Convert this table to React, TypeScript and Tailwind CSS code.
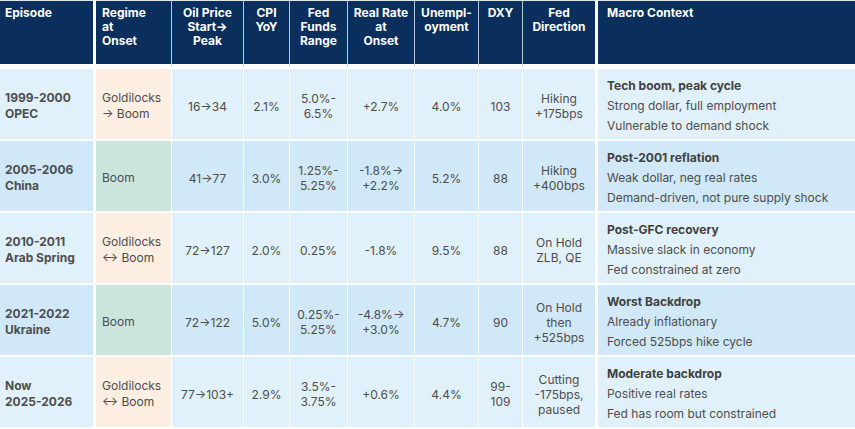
import React from "react"

type Row = {
  episode: [string, string]
  regime: string[]
  regimeKind: "gold" | "boom"
  oil: string
  cpi: string
  fed: string[]
  real: string[]
  unemp: string
  dxy: string[]
  dir: string[]
  context: [string, string, string]
}

const rows: Row[] = [
  {
    episode: ["1999-2000", "OPEC"],
    regime: ["Goldilocks", "→ Boom"],
    regimeKind: "gold",
    oil: "16→34",
    cpi: "2.1%",
    fed: ["5.0%-", "6.5%"],
    real: ["+2.7%"],
    unemp: "4.0%",
    dxy: ["103"],
    dir: ["Hiking", "+175bps"],
    context: ["Tech boom, peak cycle", "Strong dollar, full employment", "Vulnerable to demand shock"],
  },
  {
    episode: ["2005-2006", "China"],
    regime: ["Boom"],
    regimeKind: "boom",
    oil: "41→77",
    cpi: "3.0%",
    fed: ["1.25%-", "5.25%"],
    real: ["-1.8%→", "+2.2%"],
    unemp: "5.2%",
    dxy: ["88"],
    dir: ["Hiking", "+400bps"],
    context: ["Post-2001 reflation", "Weak dollar, neg real rates", "Demand-driven, not pure supply shock"],
  },
  {
    episode: ["2010-2011", "Arab Spring"],
    regime: ["Goldilocks", "↔ Boom"],
    regimeKind: "gold",
    oil: "72→127",
    cpi: "2.0%",
    fed: ["0.25%"],
    real: ["-1.8%"],
    unemp: "9.5%",
    dxy: ["88"],
    dir: ["On Hold", "ZLB, QE"],
    context: ["Post-GFC recovery", "Massive slack in economy", "Fed constrained at zero"],
  },
  {
    episode: ["2021-2022", "Ukraine"],
    regime: ["Boom"],
    regimeKind: "boom",
    oil: "72→122",
    cpi: "5.0%",
    fed: ["0.25%-", "5.25%"],
    real: ["-4.8%→", "+3.0%"],
    unemp: "4.7%",
    dxy: ["90"],
    dir: ["On Hold", "then", "+525bps"],
    context: ["Worst Backdrop", "Already inflationary", "Forced 525bps hike cycle"],
  },
  {
    episode: ["Now", "2025-2026"],
    regime: ["Goldilocks", "↔ Boom"],
    regimeKind: "gold",
    oil: "77→103+",
    cpi: "2.9%",
    fed: ["3.5%-", "3.75%"],
    real: ["+0.6%"],
    unemp: "4.4%",
    dxy: ["99-", "109"],
    dir: ["Cutting", "-175bps,", "paused"],
    context: ["Moderate backdrop", "Positive real rates", "Fed has room but constrained"],
  },
]

const Lines = ({ items }: { items: string[] }) => (
  <>
    {items.map((t, i) => (
      <div key={i}>{t}</div>
    ))}
  </>
)

export default function App() {
  const th =
    "bg-[#0b2f5c] text-white font-bold align-top pt-[5px] leading-[14px] border-r border-[#b9c7d6] border-b-[5px] border-b-white border-t border-t-[#dfe6ee]"
  const td = "border-r border-b-2 border-white align-middle pt-[4px] text-[#4d4d4d] text-center leading-[15px]"

  return (
    <div className="w-[855px] h-[429px] overflow-hidden bg-white" style={{ fontFamily: "Inter, 'Liberation Sans', sans-serif" }}>
      <table className="w-[855px] table-fixed border-separate border-spacing-0 text-[12px]">
        <colgroup>
          <col className="w-[96px]" />
          <col className="w-[76px]" />
          <col className="w-[72px]" />
          <col className="w-[46px]" />
          <col className="w-[58px]" />
          <col className="w-[67px]" />
          <col className="w-[64px]" />
          <col className="w-[44px]" />
          <col className="w-[75px]" />
          <col />
        </colgroup>
        <thead>
          <tr className="h-[69px]">
            <th className={`${th} text-left pl-[5px] border-r-[3px] border-r-white`}>Episode</th>
            <th className={`${th} text-left pl-[6px]`}>
              <Lines items={["Regime", "at", "Onset"]} />
            </th>
            <th className={`${th} text-center`}>
              <Lines items={["Oil Price", "Start→", "Peak"]} />
            </th>
            <th className={`${th} text-center`}>
              <Lines items={["CPI", "YoY"]} />
            </th>
            <th className={`${th} text-center`}>
              <Lines items={["Fed", "Funds", "Range"]} />
            </th>
            <th className={`${th} text-center`}>
              <Lines items={["Real Rate", "at", "Onset"]} />
            </th>
            <th className={`${th} text-center`}>
              <Lines items={["Unempl-", "oyment"]} />
            </th>
            <th className={`${th} text-center`}>DXY</th>
            <th className={`${th} text-center border-r-[3px] border-r-white`}>
              <Lines items={["Fed", "Direction"]} />
            </th>
            <th className={`${th} text-left pl-[9px] border-r-0`}>Macro Context</th>
          </tr>
        </thead>
        <tbody>
          {rows.map((r, i) => {
            const bg = i % 2 === 0 ? "bg-[#e1f1fb]" : "bg-[#d0e8f7]"
            const regimeBg = r.regimeKind === "gold" ? "bg-[#fdeee2]" : "bg-[#cbe5dd]"
            return (
              <tr key={i} className="h-[72px]">
                <td className={`${td} ${bg} text-left pl-[5px] font-bold text-[#3f3f3f] border-r-[3px] leading-[16px]`}>
                  <Lines items={r.episode} />
                </td>
                <td className={`${td} ${regimeBg} text-left pl-[6px] leading-[16px]`}>
                  <Lines items={r.regime} />
                </td>
                <td className={`${td} ${bg}`}>{r.oil}</td>
                <td className={`${td} ${bg}`}>{r.cpi}</td>
                <td className={`${td} ${bg}`}>
                  <Lines items={r.fed} />
                </td>
                <td className={`${td} ${bg}`}>
                  <Lines items={r.real} />
                </td>
                <td className={`${td} ${bg}`}>{r.unemp}</td>
                <td className={`${td} ${bg}`}>
                  <Lines items={r.dxy} />
                </td>
                <td className={`${td} ${bg} border-r-[3px]`}>
                  <Lines items={r.dir} />
                </td>
                <td className={`${td} ${bg} text-left pl-[9px] border-r-0 leading-[20px]`}>
                  <div className="font-bold text-[#3f3f3f]">{r.context[0]}</div>
                  <div>{r.context[1]}</div>
                  <div>{r.context[2]}</div>
                </td>
              </tr>
            )
          })}
        </tbody>
      </table>
    </div>
  )
}
